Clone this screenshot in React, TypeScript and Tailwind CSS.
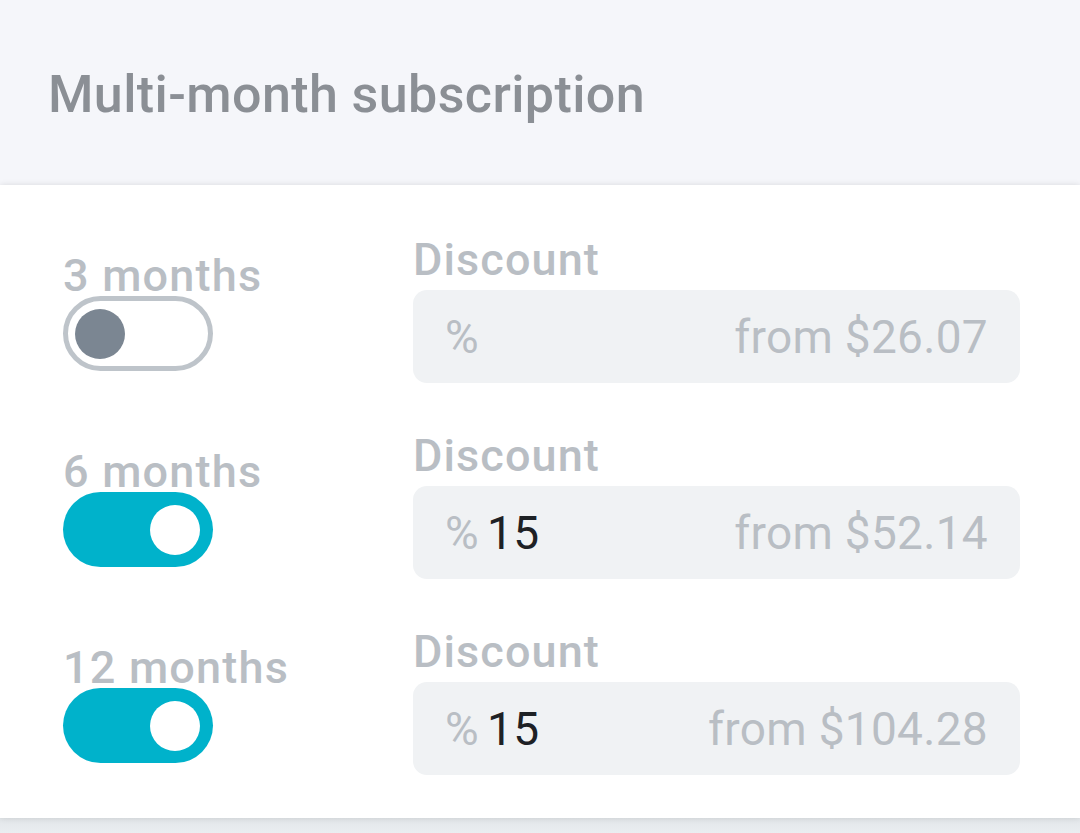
import React, { useState } from 'react';

type Plan = {
    label: string;
    enabled: boolean;
    discount: string;
    from: string;
};

const initialPlans: Plan[] = [
    { label: '3 months', enabled: false, discount: '', from: 'from $26.07' },
    { label: '6 months', enabled: true, discount: '15', from: 'from $52.14' },
    { label: '12 months', enabled: true, discount: '15', from: 'from $104.28' },
];

function Toggle({ on, onChange }: { on: boolean; onChange: () => void }) {
    if (on) {
        return (
            <button
                type="button"
                onClick={onChange}
                className="flex h-[75px] w-[150px] items-center justify-end rounded-full bg-[#00b2cb] pr-[13px]"
            >
                <span className="block h-[50px] w-[50px] rounded-full bg-white" />
            </button>
        );
    }
    return (
        <button
            type="button"
            onClick={onChange}
            className="flex h-[75px] w-[150px] items-center rounded-full border-[5px] border-[#bec4ca] bg-white pl-[7px]"
        >
            <span className="block h-[50px] w-[50px] rounded-full bg-[#7b8692]" />
        </button>
    );
}

export default function App() {
    const [plans, setPlans] = useState(initialPlans);

    const toggle = (i: number) => {
        setPlans(plans.map((p, idx) => (idx === i ? { ...p, enabled: !p.enabled } : p)));
    };

    return (
        <div className="flex h-[833px] w-[1080px] flex-col overflow-hidden bg-[#e9edf0] font-['Roboto',sans-serif]">
            <div className="flex h-[185px] shrink-0 items-center bg-[#f5f6fa] pl-[48px] pt-[4px]">
                <h1 className="text-[52px] font-medium leading-none tracking-[0.4px] text-[#8b8f95]">Multi-month subscription</h1>
            </div>

            <div className="relative flex h-[633px] shrink-0 flex-col gap-[50px] bg-white pb-[44px] pl-[63px] pr-[60px] pt-[52px] shadow-[0_0_6px_rgba(0,0,0,0.12)]">
                {plans.map((plan, i) => (
                    <div key={plan.label} className="flex">
                        <div className="flex w-[350px] shrink-0 flex-col pt-[16px]">
                            <span className="text-[45px] font-medium leading-none tracking-[1.2px] text-[#b9bec4]">{plan.label}</span>
                            <div className="-mt-[2px]">
                                <Toggle on={plan.enabled} onChange={() => toggle(i)} />
                            </div>
                        </div>
                        <div className="flex flex-1 flex-col gap-[8px]">
                            <span className="text-[45px] font-medium leading-none tracking-[1.1px] text-[#b9bec4]">Discount</span>
                            <div className="flex h-[93px] items-center rounded-[14px] bg-[#f0f2f4] px-[32px] text-[46px] leading-none tracking-[0.3px]">
                                <span className="text-[#b9bec4]">%</span>
                                <span className="ml-[8px] text-[#1e2125]">{plan.discount}</span>
                                <span className="ml-auto text-[#b9bec4]">{plan.from}</span>
                            </div>
                        </div>
                    </div>
                ))}
            </div>

            <div className="flex-1 bg-gradient-to-b from-[#e2e6e9] to-[#eaeef1]" />
        </div>
    );
}
